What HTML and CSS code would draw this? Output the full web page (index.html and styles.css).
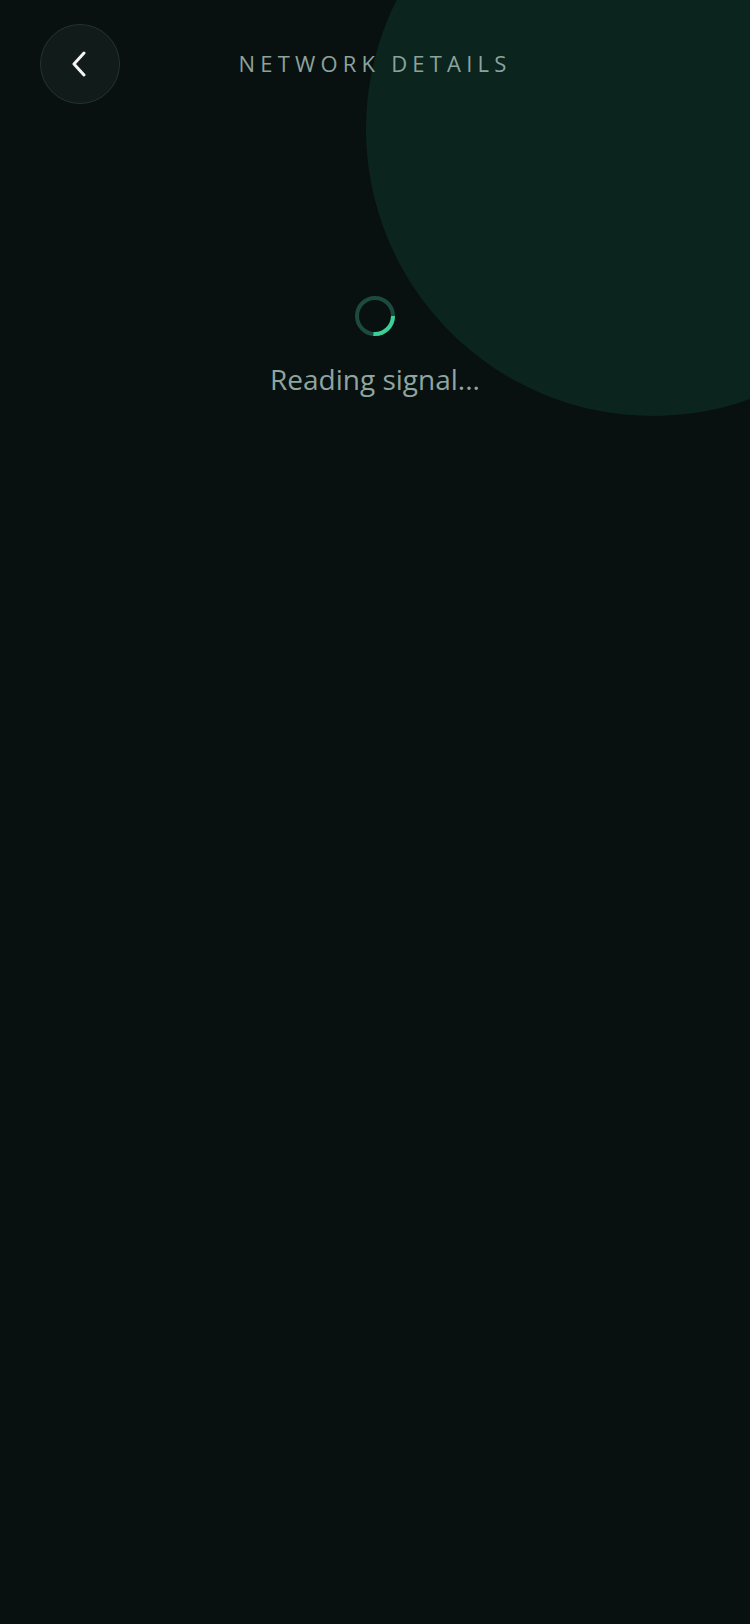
FILE: index.html
```
<!DOCTYPE html>
<html lang="en">
<head>
<meta charset="utf-8">
<title>Network Details</title>
<link rel="stylesheet" href="styles.css">
</head>
<body>
<div class="screen">
  <div class="glow"></div>
  <header class="header">
    <button class="back" aria-label="Back">
      <svg width="16" height="26" viewBox="0 0 16 26"><path d="M13 2 L3 13 L13 24" fill="none" stroke="#f2f5f4" stroke-width="3" stroke-linecap="round" stroke-linejoin="round"/></svg>
    </button>
    <h1 class="title">NETWORK DETAILS</h1>
    <div class="spacer"></div>
  </header>
  <main class="loader">
    <svg class="spinner" width="40" height="40" viewBox="0 0 40 40">
      <circle cx="20" cy="20" r="18" fill="none" stroke="#1c4a3e" stroke-width="4"/>
      <path d="M38 20 A18 18 0 0 1 18.4 37.9" fill="none" stroke="#3ccf98" stroke-width="4"/>
    </svg>
    <p class="status">Reading signal...</p>
  </main>
</div>
</body>
</html>
```
FILE: styles.css
```
html, body {
  margin: 0;
  padding: 0;
  background: #081010;
}
body {
  font-family: "Open Sans", "Noto Sans", sans-serif;
  width: 750px;
  height: 1624px;
  overflow: hidden;
}
.screen {
  position: relative;
  width: 750px;
  height: 1624px;
  overflow: hidden;
}
.glow {
  position: absolute;
  left: 366px;
  top: -158px;
  width: 574px;
  height: 574px;
  border-radius: 50%;
  background: #0c241e;
}
.header {
  position: relative;
  display: grid;
  grid-template-columns: 80px 1fr 80px;
  align-items: center;
  padding: 24px 40px 0;
}
.back {
  width: 80px;
  height: 80px;
  border-radius: 50%;
  border: 1.5px solid #26332f;
  background: #111b19;
  display: flex;
  align-items: center;
  justify-content: center;
  padding: 0 2px 0 0;
  cursor: pointer;
}
.title {
  margin: 0 0 2px;
  text-align: center;
  font-weight: 400;
  font-size: 22px;
  letter-spacing: 5.2px;
  color: #8ba39c;
  padding-left: 0;
}
.loader {
  position: relative;
  display: flex;
  flex-direction: column;
  align-items: center;
  margin-top: 192px;
}
.spinner {
  display: block;
}
.status {
  margin: 24px 0 0;
  font-size: 28px;
  color: #8fa59f;
  line-height: 38px;
}
```
